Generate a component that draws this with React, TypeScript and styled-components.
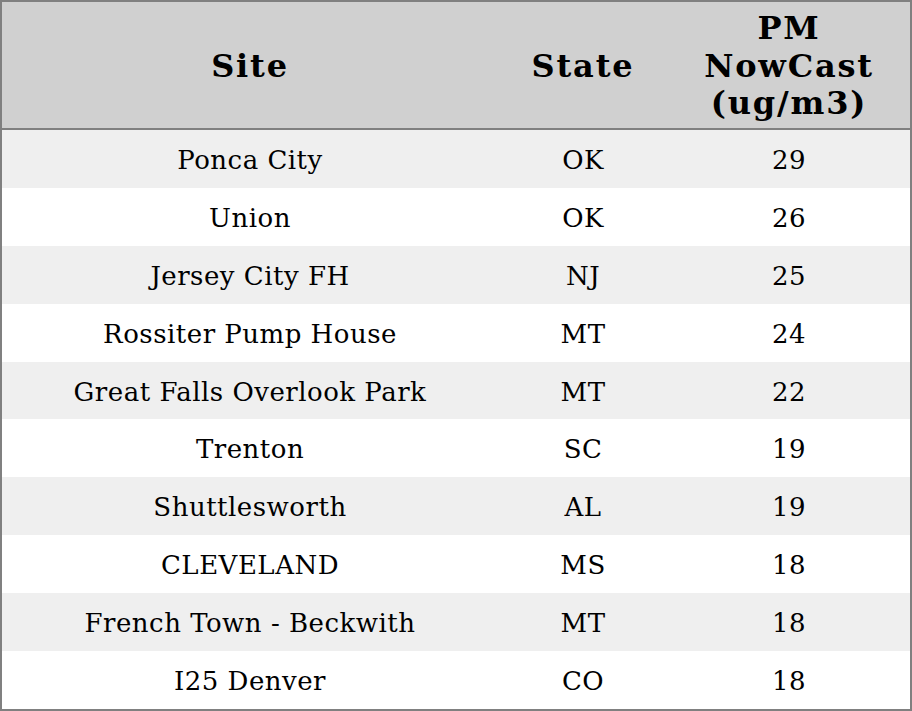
import styled, { createGlobalStyle } from 'styled-components'

interface SiteReading {
  site: string
  state: string
  nowcast: number
}

const readings: SiteReading[] = [
  { site: 'Ponca City', state: 'OK', nowcast: 29 },
  { site: 'Union', state: 'OK', nowcast: 26 },
  { site: 'Jersey City FH', state: 'NJ', nowcast: 25 },
  { site: 'Rossiter Pump House', state: 'MT', nowcast: 24 },
  { site: 'Great Falls Overlook Park', state: 'MT', nowcast: 22 },
  { site: 'Trenton', state: 'SC', nowcast: 19 },
  { site: 'Shuttlesworth', state: 'AL', nowcast: 19 },
  { site: 'CLEVELAND', state: 'MS', nowcast: 18 },
  { site: 'French Town - Beckwith', state: 'MT', nowcast: 18 },
  { site: 'I25 Denver', state: 'CO', nowcast: 18 },
]

const GlobalStyle = createGlobalStyle`
  html,
  body {
    margin: 0;
    padding: 0;
    background: #ffffff;
  }

  body {
    font-family: 'DejaVu Serif', 'Liberation Serif', serif;
    color: #000000;
  }
`

export default function App() {
  return (
    <>
      <GlobalStyle />
      <Table>
        <colgroup>
          <col style={{ width: 496 }} />
          <col style={{ width: 170 }} />
          <col />
        </colgroup>
        <thead>
          <tr>
            <HeadCell>Site</HeadCell>
            <HeadCell>State</HeadCell>
            <HeadCell>
              PM
              <br />
              NowCast
              <br />
              (ug/m3)
            </HeadCell>
          </tr>
        </thead>
        <tbody>
          {readings.map((r, i) => (
            <Row key={r.site} $striped={i % 2 === 0}>
              <Cell>{r.site}</Cell>
              <Cell>{r.state}</Cell>
              <Cell>{r.nowcast}</Cell>
            </Row>
          ))}
        </tbody>
      </Table>
    </>
  )
}

const Table = styled.table`
  width: 912px;
  height: 711px;
  border-collapse: separate;
  border-spacing: 0;
  border: 2.5px solid #808080;
  box-sizing: border-box;
  table-layout: fixed;
`

const HeadCell = styled.th`
  height: 128px;
  padding: 3px 6px 0;
  background-color: #d0d0d0;
  border-bottom: 2.5px solid #808080;
  font-size: 32px;
  line-height: 37.5px;
  letter-spacing: 1.8px;
  font-weight: 700;
  text-align: center;
  vertical-align: middle;
  box-sizing: border-box;
`

const Row = styled.tr<{ $striped: boolean }>`
  background-color: ${({ $striped }) => ($striped ? '#efefef' : '#ffffff')};
`

const Cell = styled.td`
  height: 57.5px;
  padding: 2px 6px 0;
  font-size: 26px;
  line-height: 30px;
  letter-spacing: 0.5px;
  text-align: center;
  vertical-align: middle;
  box-sizing: border-box;
`
